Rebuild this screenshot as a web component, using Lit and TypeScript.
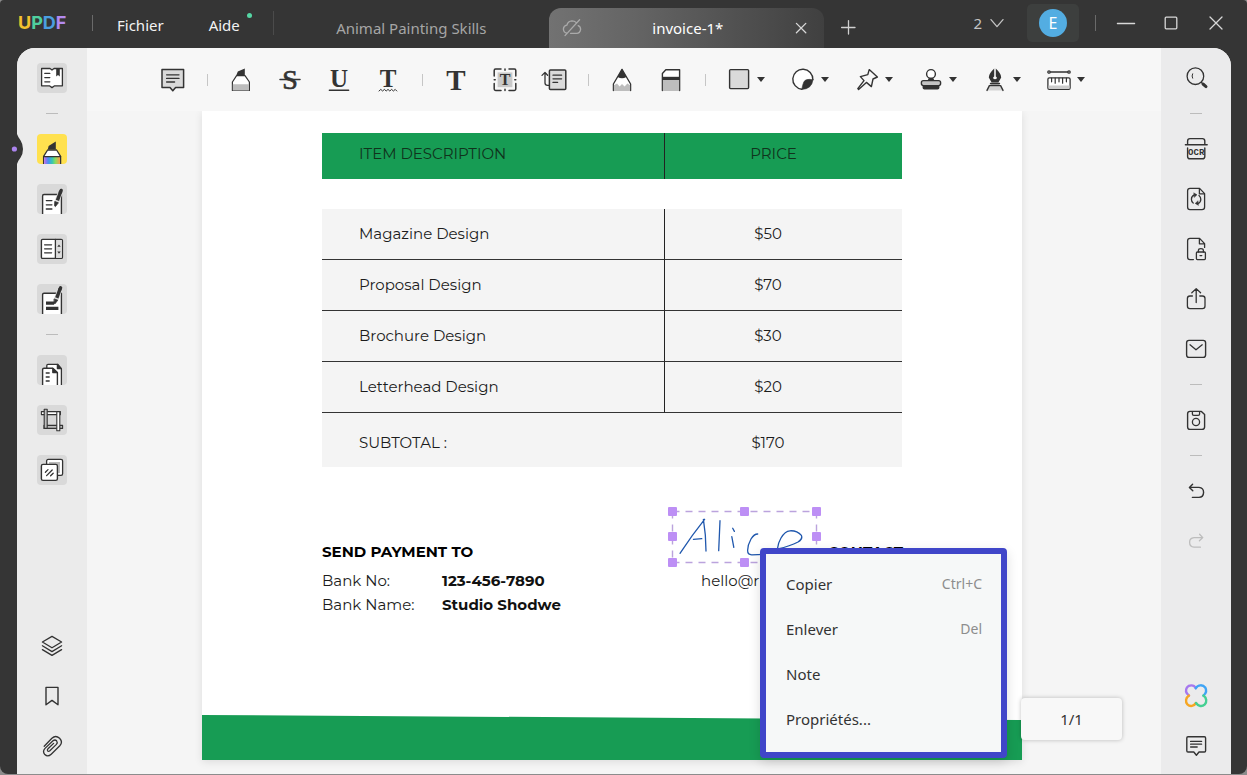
import { LitElement, html, svg, css } from "lit";
import { customElement } from "lit/decorators.js";
import { classMap } from "lit/directives/class-map.js";

const draw = (size: number, body: unknown) => html`<svg
  width=${size}
  height=${size}
  viewBox="0 0 ${size} ${size}"
  fill="none"
  stroke="currentColor"
  stroke-width="1.3"
  stroke-linecap="round"
  stroke-linejoin="round"
  aria-hidden="true"
>${body}</svg>`;

const pen = svg`<path d="M23.8 7.2 L20.4 16.4" stroke="#ddd" stroke-width="5"/><path d="M23.8 7.2 L20.4 16.4" stroke-width="3.4" stroke-linecap="butt"/><path d="M18 17.6L21.4 18.8L18.4 22.6Q17.6 22.4 17.6 21.4Z" fill="currentColor" stroke-width=".8"/><path d="M23.4 8.2L24.2 6.4" stroke-width="3.4"/>`;

/* Left and right rail glyphs, 30 x 30 */
const rail: Record<string, unknown> = {
  reader: svg`<path d="M4.6 5.5 H13 L15 7 L17 5.5 H25.4 V22.8 H17.6 L15 24.6 L12.4 22.8 H4.6 Z" fill="#fff" stroke-width="1.3"/><path d="M7.8 10.4h5M7.8 14.6h5M7.8 18.8h5"/><path d="M19.2 5.4h3.6v8l-1.8-1.5-1.8 1.5z" fill="currentColor" stroke="none"/>`,
  marker: svg`<defs><linearGradient id="rb"><stop offset="0" stop-color="#c06be8"/><stop offset=".25" stop-color="#4a8cf5"/><stop offset=".5" stop-color="#35c8b0"/><stop offset=".72" stop-color="#8fdc5a"/><stop offset="1" stop-color="#ff9a4a"/></linearGradient></defs><path d="M10.8 15.4 L11.6 12 L18.8 7.4 V15.4 Z" fill="currentColor" stroke="none"/><path d="M10.6 16 H19.6 L23.6 22.4 V31 H6.6 V22.4 Z" fill="#fff"/><path d="M7.2 23h15.8v8H7.2z" fill="url(#rb)" stroke="none"/><path d="M6.6 22.6h17"/>`,
  edit: svg`<path d="M5.6 31 V12 Q5.6 10.5 7 10.5 H24.4 V31" fill="#fff" stroke-width="1.4"/><path d="M9.3 16.6h5.6M9.3 20.8h5.6M9.3 25h5.6"/>${pen}`,
  form: svg`<rect x="4.4" y="5.4" width="21" height="19" rx="1.2" fill="#fff" stroke-width="1.4"/><path d="M18.6 6h6.2v17.8h-6.2z" fill="#dcdcdc" stroke="none"/><path d="M18.4 5.4v19M7.6 10.8h7M7.6 14.8h7M7.6 18.8h7"/><path d="M20.3 12.8l1.7-2.4 1.7 2.4zM20.3 17.4l1.7 2.4 1.7-2.4z" fill="currentColor" stroke="none"/>`,
  redact: svg`<path d="M5.6 31 V10.6 Q5.6 9.2 7 9.2 H24.4 V31" fill="#fff" stroke-width="1.4"/><path d="M9 17.6h8v3.2H9zM9 22.8h12.4v3.2H9z" fill="currentColor" stroke="none"/><g transform="translate(-.6 -2.6)">${pen}</g>`,
  pages: svg`<path d="M9.8 31 V10.6 Q9.8 9.3 11 9.3 H20.6 L24.4 13.6 V31" fill="#fff"/><path d="M20.4 9.4v4.2h3.8z" fill="currentColor"/><path d="M5.6 31 V14.6 Q5.6 13.2 7 13.2 H15.8 L20.4 17.6 V31" fill="#fff" stroke-width="1.4"/><path d="M15.8 13.4v4.2h4.4z" fill="currentColor"/><path d="M9.2 18h3M9.2 22h3M9.2 26h3"/>`,
  crop: svg`<g stroke-width="1.1"><path d="M4.4 6.6H23.4V9.6H4.4Z" fill="#fff"/><path d="M7 20.4H25.6V23.4H7Z" fill="#bdbdbd"/><path d="M7.2 4.2H10.2V23.4H7.2Z" fill="#bdbdbd"/><path d="M19.8 6.6H22.8V25.8H19.8Z" fill="#fff"/></g>`,
  watermark: svg`<rect x="9.6" y="4.4" width="16" height="16" rx="1.6" fill="#fff"/><rect x="12" y="7" width="11" height="11" fill="#bbb" stroke="none"/><rect x="4.4" y="9.4" width="16" height="16" rx="1.6" fill="#fff" stroke-width="1.4"/><path d="M8.4 17.2l2.6-2.6M9.6 20.6l5.6-5.6M13.6 20.8l2.6-2.6"/>`,
  layers: svg`<path d="M15 5.4 L24.6 11 L15 16.8 L5.4 11 Z"/><path d="M5.4 14.8 L15 20.6 L24.6 14.8M5.4 18.6 L15 24.4 L24.6 18.6"/>`,
  bookmark: svg`<path d="M9 6.4 H21 V23.8 L15 19.4 L9 23.8 Z" stroke-width="1.4"/>`,
  clip: svg`<path d="M7.2 15.2 L14.9 7.2 Q18.6 3.8 22.6 7.2 Q26.2 11 22.8 14.8 L14.2 23.2 Q10.8 26.4 7.8 23.6 Q5.2 20.4 8 17.4 L16 9.8 Q18 8.2 19.6 9.8 Q21 11.6 19.4 13.4 L12.6 20 Q11.4 20.8 10.6 19.8 Q10 18.8 11 17.8 L16.6 12.4"/>`,
  search: svg`<circle cx="14.4" cy="13.2" r="8.3"/><path d="M11.6 10.8q-1.2 2.2 0 4.4" stroke-width="1"/><path d="M20.4 19.4l1.4 1.4"/><path d="M22 21l3 2.6" stroke-width="3"/>`,
  ocr: svg`<path d="M6.6 10.6 V7 Q6.6 4.6 9 4.6 H21.4 Q23.8 4.6 23.8 7 V10.6M4.4 10.8H26.2M6.6 14V22.4Q6.6 24.8 9 24.8H21.4Q23.8 24.8 23.8 22.4V14" stroke-width="1.4"/><text x="15.2" y="21.4" text-anchor="middle" class="ocr" stroke="none" fill="currentColor">OCR</text>`,
  convert: svg`<path d="M9 4.4 H18.6 L23.6 9.6 V23 Q23.6 25.6 21 25.6 H9 Q6.6 25.6 6.6 23 V6.8 Q6.6 4.4 9 4.4 Z"/><path d="M18.4 4.6 V9.8 H23.4"/><path d="M13.4 10.8 Q10.4 12 10.4 15.2 Q10.4 17.6 12.2 19M16.8 19.6 Q19.8 18.4 19.8 15.2 Q19.8 12.8 18 11.4"/><path d="M13 9l3 1.8-2.6 2.4zM17.2 21.2l-3-1.8 2.6-2.4z" fill="currentColor" stroke-width=".5"/>`,
  protect: svg`<path d="M12.4 25.6 H9 Q6.6 25.6 6.6 23 V6.8 Q6.6 4.4 9 4.4 H18.6 L23.6 9.6 V13.4M18.4 4.6 V9.8 H23.4"/><rect x="15.4" y="18" width="9" height="7.6" rx="1"/><path d="M17.4 18V16.4Q17.4 14.6 19.9 14.6T22.4 16.4V18M19 21.6h1.8"/>`,
  share: svg`<path d="M11.4 12 H9 Q6.4 12 6.4 14.4 V22 Q6.4 24.6 9 24.6 H21.4 Q24 24.6 24 22 V14.4 Q24 12 21.4 12 H18.8M15.2 18.6V4.8M10.8 8.8L15.2 4.6L19.6 8.8"/>`,
  mail: svg`<rect x="5.6" y="6.4" width="19" height="17" rx="2.4" stroke-width="1.4"/><path d="M9 10.8 L15 15.8 L21.2 10.8"/>`,
  save: svg`<path d="M9 6.4 H20.4 L23.6 9.6 V22 Q23.6 24.4 21 24.4 H9 Q6.6 24.4 6.6 22 V8.8 Q6.6 6.4 9 6.4 Z" stroke-width="1.4"/><path d="M11.4 6.6V9Q11.4 10.4 12.8 10.4H17.2Q18.6 10.4 18.6 9V6.6"/><circle cx="15" cy="17" r="3.6"/>`,
  undo: svg`<path d="M11.6 8.2 L8.4 11.4 L11.8 14.8M8.6 11.4 H18 Q22.6 11.8 22.6 16.4 Q22.4 21.2 18 21.4 H11.4" stroke-width="1.4"/>`,
  redo: svg`<path d="M18.6 8.2 L21.8 11.6 L18.4 14.8M21.6 11.6 H13 Q8.6 12 8.6 16.2 Q8.6 20.8 13 21.2 H19.4"/>`,
  ai: svg`<g stroke-width="2.4"><path d="M14.8 7.2 C12.8 3.2 7.8 4 6 6.4 C4 9.6 5.4 12.6 8 14.6" stroke="#a678ee"/><path d="M14.8 7.2 C17 3.4 22 3.6 24.2 6.4 C26 9.6 24.8 12.6 22.4 14.6" stroke="#3fa4f5"/><path d="M8 14.6 C4.6 16.8 4.2 21 6.4 23.4 C9.2 26 13 25.2 15 22" stroke="#f6a623"/><path d="M22.4 14.6 C25.8 17 26 21 23.8 23.4 C21 26 17.4 25.4 15 22" stroke="#45cf93"/></g>`,
  note: svg`<path d="M7 5.8 H23.4 Q24.6 5.8 24.6 7 V19.8 Q24.6 21 23.4 21 H18 L15.4 24.2 L12.8 21 H7 Q5.8 21 5.8 19.8 V7 Q5.8 5.8 7 5.8 Z" stroke-width="1.4"/><path d="M9.6 10.4h11M9.6 13.2h11M9.6 16h6.6"/>`,
};

/* Toolbar glyphs, 24 x 24 */
const ruler = svg`<circle cx="2" cy="4" r="1.2"/><circle cx="22" cy="4" r="1.2"/><path d="M3.4 4h17.2"/><rect x=".9" y="9.8" width="22.2" height="11.6" rx="1.4" fill="#fff"/><path d="M1.6 17.6h21v3.2h-21z" fill="#ccc" stroke="none"/><path d="M4.6 10.2v3.6M8.2 10.2v5M12 10.2v3.6M15.6 10.2v5M19.4 10.2v3.6" stroke-width="1.2"/>`;
const tools: Array<{ id: string; label: string; art?: unknown; drop?: boolean }> = [
  { id: "comment", label: "Note", art: svg`<path d="M1 1.4 H22.6 V19.4 H14.6 L11.8 22.8 L9 19.4 H1 Z" fill="#dadada" stroke-width="1.5"/><path d="M5.6 6.8h12.4M5.6 10.4h12.4M5.6 14h8"/>` },
  { id: "|", label: "" },
  { id: "highlight", label: "Surligner", art: svg`<path d="M7.2 7.4 L8.8 3.4 L15.8.4 V7.4 Z" fill="currentColor" stroke="none"/><path d="M7.6 7.6 H16 L20.4 14 V22.4 H3.4 V14 Z" fill="#fff" stroke-width="1.2"/><path d="M3.8 16.2h16.2v6.2H3.8z" fill="#bdbdbd" stroke="none"/>` },
  { id: "strike", label: "Barrer", art: svg`<text x="12" y="21" text-anchor="middle" class="g reg" fill="currentColor">S</text><path d="M2 11.4h20" stroke-width="1.5"/>` },
  { id: "underline", label: "Souligner", art: svg`<text x="12" y="18.6" text-anchor="middle" class="g" stroke="none" fill="currentColor">U</text><path d="M2.4 22.2h19.2" stroke-width="1.5"/>` },
  { id: "squiggly", label: "Souligner en vague", art: svg`<text x="12" y="19" text-anchor="middle" class="g" stroke="none" fill="currentColor">T</text><path d="M3 23l1.8-1.6 1.8 1.6 1.8-1.6 1.8 1.6 1.8-1.6 1.8 1.6 1.8-1.6 1.8 1.6 1.8-1.6 1.6 1.6" stroke-width="1"/>` },
  { id: "|", label: "" },
  { id: "text", label: "Texte", art: svg`<text x="12" y="21.6" text-anchor="middle" class="g big" stroke="none" fill="currentColor">T</text>` },
  { id: "textbox", label: "Zone de texte", art: svg`<path d="M4.6 4.4h14.8v14.8H4.6z" fill="#c9c9c9" stroke="none"/><text x="12" y="17.4" text-anchor="middle" class="g small" stroke="none" fill="currentColor">T</text><path d="M1.2 8V2.4Q1.2 1 2.6 1H8M16 1h5.4Q22.8 1 22.8 2.4V8M22.8 15.6v5.4Q22.8 22.4 21.4 22.4H16M8 22.4H2.6Q1.2 22.4 1.2 21V15.6M12 1v1.2M12 21.2v1.2M1.2 11.8h1M21.8 11.8h1" stroke-width="1.5"/>` },
  { id: "callout", label: "Légende", art: svg`<rect x="7.4" y="2" width="16.4" height="19.6" rx="1" fill="#dadada" stroke-width="1.5"/><path d="M11 7.2h8.6M11 10.8h8.6M11 14.4h4.6M7 17.4H5.6Q3 17.4 3 15V4.6M0 7.4L3 4.4L5.6 7.2"/>` },
  { id: "|", label: "" },
  { id: "pencil", label: "Crayon", art: svg`<path d="M3.4 22.6V16L12 1.4L20.6 16V22.6" fill="#fff" stroke-width="1.3"/><path d="M3.9 17.2L7 15.6L9.6 18.4L12 16L14.6 18.4L17.4 15.6L20.1 17.2V23H3.9z" fill="#bdbdbd" stroke="none"/><path d="M12 .8L16.4 9Q12 11.4 7.6 9Z" fill="currentColor" stroke="none"/>` },
  { id: "eraser", label: "Gomme", art: svg`<path d="M3.4 22.6V5.4L6.8 1.8H20.6V22.6" fill="#fff" stroke-width="1.4"/><path d="M3.9 12h16.2v11H3.9z" fill="#bdbdbd" stroke="none"/><path d="M3 8.8h18v3.2H3z" fill="currentColor" stroke="none"/>` },
  { id: "|", label: "" },
  { id: "shape", label: "Forme", drop: true, art: svg`<rect x="2.6" y="1.6" width="19" height="19" rx="1" fill="#dadada" stroke-width="1.4"/>` },
  { id: "sticker", label: "Autocollant", drop: true, art: svg`<path d="M10.8 21.2A10 10 0 1 1 21.8 11.6" fill="#fff" stroke-width="1.4"/><path d="M22 11.8Q14.6 10.2 12.8 14Q11.4 17.2 10.8 21.4Q20.8 21.2 22 11.8Z" fill="currentColor" stroke-width=".6"/>` },
  { id: "pin", label: "Épingle", drop: true, art: svg`<path d="M14.2 1.6L22.4 9L18 11L16.4 18.6L11.4 14.4L3.6 21.4L2.8 20.6L9 12.6L5.4 8.6L12.8 6.6Z" stroke-width="1.4"/>` },
  { id: "stamp", label: "Tampon", drop: true, art: svg`<circle cx="12" cy="6" r="4.4" fill="#fff" stroke-width="1.4"/><path d="M9.4 12.4L10.2 10.4H13.8L14.6 12.4z" fill="currentColor"/><rect x="2.4" y="12.6" width="19.2" height="5" rx="2" fill="#c4c4c4" stroke-width="1.4"/><path d="M3.6 17.6h16.8v2.2Q20.4 21.6 18.6 21.6H5.4Q3.6 21.6 3.6 19.8z" fill="currentColor" stroke="none"/>` },
  { id: "sign", label: "Signature", drop: true, art: svg`<path d="M11.2 .6Q5.6 6 5.8 9.4L8.6 14.6H15.4L18.2 9.4Q18.4 6 12.8 .6V8.4Q14.2 9 13.8 10.4Q12 12 10.2 10.4Q9.8 9 11.2 8.4Z" fill="currentColor" stroke="none"/><path d="M7.6 15.6H16.4" stroke-width="1.6"/><path d="M6.6 18.2h10.8l1.8 4.2H4.8z" fill="#d4d4d4" stroke="none"/><path d="M6.4 17.6H17.6L20 22.4M6.4 17.6L4 22.4" stroke-width="1.4"/>` },
  { id: "measure", label: "Mesurer", drop: true, art: ruler },
];

@customElement("app-root")
export class AppRoot extends LitElement {
  static styles = css`
    :host {
      --ink: #333;
      --chrome: #353535;
      display: block;
      height: 100vh;
      background: #8c8c8c;
      font: 15px/20px "Noto Sans", "Segoe UI", sans-serif;
      color: var(--ink);
    }
    * { box-sizing: border-box; }
    button {
      font: inherit;
      color: inherit;
      border: 0;
      padding: 0;
      background: none;
      display: flex;
      align-items: center;
      justify-content: center;
      flex: none;
    }
    svg { display: block; flex: none; overflow: visible; }
    .window {
      height: calc(100vh - 1px);
      display: flex;
      flex-direction: column;
      background: var(--chrome);
      border-radius: 4px 4px 8px 8px;
      overflow: hidden;
    }

    .titlebar {
      height: 48px;
      flex: none;
      display: flex;
      align-items: center;
      padding: 0 16px 2px 18px;
      color: #f2f2f2;
    }
    .logo { font: 700 18px/20px Inter, "Open Sans", sans-serif; width: 74px; }
    .u { color: #f2c12e; }
    .p { color: #4fcf9f; }
    .d { color: #4b9fe0; }
    .f { color: #b48af0; }
    .vsep { width: 1px; height: 16px; background: #6a6a6a; flex: none; }
    .vsep.tall { height: 24px; background: #4b4b4b; }
    .menubar { display: flex; gap: 45px; margin: 4px 24px 0; }
    .menubar + .vsep { margin-left: 9px; }
    .help { position: relative; }
    .help::after {
      content: "";
      position: absolute;
      right: -12px;
      top: -2px;
      width: 5px;
      height: 5px;
      border-radius: 50%;
      background: #55d6a4;
    }
    .tabs { display: flex; align-self: flex-end; flex: 0 1 550px; margin-bottom: -2px; }
    .tab {
      flex: 1 1 50%;
      min-width: 0;
      height: 40px;
      display: flex;
      align-items: center;
      justify-content: center;
      color: #a6a6a6;
    }
    .tab.active {
      justify-content: space-between;
      padding: 0 16px 0 13px;
      color: #fff;
      background: linear-gradient(90deg, #727272, #656565 30%, #404040);
      border-radius: 12px 12px 0 0;
    }
    .tab.active svg { color: #aaa; }
    .plus { width: 48px; height: 40px; margin-top: 8px; color: #d0d0d0; }
    .winctl { margin-left: auto; display: flex; align-items: center; color: #d8d8d8; }
    .count { gap: 8px; margin-right: 23px; color: #c4c4c4; }
    .account { width: 52px; height: 38px; border-radius: 5px; background: #3d3f3e; margin-right: 16px; }
    .avatar {
      width: 28px;
      height: 28px;
      border-radius: 50%;
      background: #53ade2;
      color: #fff;
      font-size: 16px;
      line-height: 28px;
    }
    .ctl { width: 30px; height: 30px; margin-left: 15px; }

    .workspace {
      flex: 1;
      min-height: 0;
      margin: 0 16px 0 17px;
      display: flex;
      background: #f6f6f6;
      border-radius: 18px 18px 0 0;
      position: relative;
    }
    .notch { position: absolute; left: -6px; top: 86px; }
    .rail {
      width: 70px;
      flex: none;
      display: flex;
      flex-direction: column;
      align-items: center;
      gap: 20px;
      padding: 15px 0 13px;
      background: #ebebeb;
      border-radius: 18px 0 0 0;
    }
    .rail.right { border-radius: 0 18px 0 0; background: #ebebec; }
    .rail button { width: 30px; height: 30px; border-radius: 4px; overflow: hidden; }
    .rail .tile { background: #d9d9d9; }
    .rail .on { background: #ffe14f; }
    .rail .off { color: #bdbdbd; }
    .rail .push { margin-top: auto; }
    .rail i { width: 12px; height: 1px; background: #bcbcbc; flex: none; }
    .ocr { font: 700 9px "Liberation Mono", monospace; }

    .center { flex: 1; min-width: 0; display: flex; flex-direction: column; position: relative; }
    .toolbar {
      height: 63px;
      flex: none;
      display: flex;
      align-items: center;
      justify-content: center;
      gap: 25px;
      padding-right: 2px;
      background: #f7f7f7;
    }
    .toolbar .drop { gap: 6px; padding-right: 1px; }
    .toolbar i { width: 1px; height: 12px; margin: 0 -4px 0 -3px; background: #c6c6c6; }
    .caret { border: 4px solid transparent; border-top: 5px solid #333; border-bottom: 0; }
    .g { font: 700 25px "Liberation Serif", serif; }
    .reg { font-size: 28px; font-weight: 400; stroke-width: .7px; }
    .big { font-size: 29px; }
    .small { font-size: 16px; }

    .viewer {
      flex: 1;
      min-height: 0;
      display: flex;
      justify-content: center;
      padding: 0 24px 14px 0;
      background: #f5f5f5;
    }
    .page {
      flex: 0 1 820px;
      min-width: 0;
      display: flex;
      flex-direction: column;
      position: relative;
      padding-top: 22px;
      background: #fff;
      box-shadow: 0 2px 8px rgba(0, 0, 0, .1);
      color: #1c1c1c;
      font: 15px/24px Montserrat, Inter, sans-serif;
      clip-path: inset(0 -200px -14px -12px);
    }
    table { margin: 0 120px; border-spacing: 0; table-layout: fixed; }
    th { font-weight: 400; }
    td, th { padding: 0; height: 51px; text-align: left; }
    td:first-child, th:first-child { width: 343px; padding-left: 37px; }
    td:last-child, th:last-child { text-align: center; padding-right: 31px; }
    thead th {
      height: 46px;
      padding-bottom: 4px;
      background: #179c54;
      color: #10331c;
    }
    thead th:first-child, .line td:first-child { border-right: 1px solid #222; }
    thead th:last-child { padding-right: 20px; }
    tbody::before { content: ""; display: block; height: 30px; }
    tbody td { background: #f4f4f4; }
    .line td { border-bottom: 1px solid #333; }
    .total td { height: 54px; padding-top: 6px; }

    .payment { display: flex; justify-content: space-between; margin: 73px 119px 0 120px; }
    h2 { margin: 0 0 5px; font: 700 15px/24px Montserrat, Inter, sans-serif; color: #000; }
    dl { margin: 0; display: grid; grid-template-columns: 120px auto; }
    dt, dd { margin: 0; }
    dd { font-weight: 700; color: #111; }
    .contact { width: 202px; }
    .contact h2 { text-align: right; }
    .band { margin-top: auto; height: 45px; background: #179c54; clip-path: polygon(0 0, 100% 5px, 100% 100%, 0 100%); }

    .signature { position: absolute; left: 464px; top: 394px; }
    .menu {
      position: absolute;
      left: 558px;
      top: 437px;
      width: 247px;
      margin: 0;
      padding: 7px 0 11px;
      list-style: none;
      background: #f6f8f8;
      border: 6px solid #4046c9;
      border-radius: 4px;
      box-shadow: 0 4px 12px rgba(0, 0, 0, .14);
      color: #333;
      font: 15px/20px "Noto Sans", "Segoe UI", sans-serif;
    }
    .menu button { width: 100%; height: 45px; padding: 0 19px 0 20px; justify-content: space-between; }
    kbd { font: 14px/20px "Noto Sans", "Segoe UI", sans-serif; color: #8d8d8d; }
    .pager {
      position: absolute;
      right: 39px;
      bottom: 34px;
      width: 101px;
      height: 42px;
      background: #f8f8f8;
      border-radius: 4px;
      box-shadow: 0 0 4px rgba(0, 0, 0, .25);
      display: flex;
      align-items: center;
      justify-content: center;
    }
  `;

  private railButton(id: string, label: string, mods: Record<string, boolean> = {}) {
    return html`<button class=${classMap(mods)} aria-label=${label}>${draw(30, rail[id])}</button>`;
  }

  private titlebar() {
    return html`<header class="titlebar">
      <span class="logo"><span class="u">U</span><span class="p">P</span><span class="d">D</span><span class="f">F</span></span>
      <span class="vsep"></span>
      <nav class="menubar"><button>Fichier</button><button class="help">Aide</button></nav>
      <span class="vsep tall"></span>
      <div class="tabs">
        <button class="tab">Animal Painting Skills</button>
        <div class="tab active">
          ${draw(20, svg`<path d="M5.2 15.2Q1.4 14.6 1.4 11Q1.6 7.8 4.8 7.2Q6 3 10 2.8Q12.6 2.8 14 4.4M16.2 7.6Q18.8 8.8 18.6 11.6Q18 15.2 14.6 15.4H8.6M17.6 1.8L3 17.6"/>`)}
          <span>invoice-1*</span>
          <button aria-label="Fermer l'onglet">${draw(14, svg`<path d="M2.4 2.4l9.4 9.4M11.8 2.4L2.4 11.8" stroke="#d8d8d8"/>`)}</button>
        </div>
      </div>
      <button class="plus" aria-label="Nouvel onglet">${draw(14, svg`<path d="M7.5.6v13.4M.6 7.5h13.4"/>`)}</button>
      <div class="winctl">
        <button class="count">2 ${draw(14, svg`<path d="M1 3.6L7 10.6L13 3.6"/>`)}</button>
        <button class="account"><span class="avatar">E</span></button>
        <span class="vsep"></span>
        <button class="ctl" aria-label="Réduire">${draw(20, svg`<path d="M1.4 10.5h17.2"/>`)}</button>
        <button class="ctl" aria-label="Agrandir">${draw(14, svg`<rect x="1.2" y="1.2" width="11.6" height="11.6" rx="1"/>`)}</button>
        <button class="ctl" aria-label="Fermer">${draw(14, svg`<path d="M1 1l12 12M13 1L1 13"/>`)}</button>
      </div>
    </header>`;
  }

  private toolbar() {
    return html`<div class="toolbar">
      ${tools.map((t) =>
        t.id === "|"
          ? html`<i></i>`
          : html`<button class=${classMap({ drop: !!t.drop })} aria-label=${t.label}>
              ${draw(24, t.art)}${t.drop ? html`<span class="caret"></span>` : ""}
            </button>`
      )}
    </div>`;
  }

  private page() {
    const rows = [
      ["Magazine Design", "$50"],
      ["Proposal Design", "$70"],
      ["Brochure Design", "$30"],
      ["Letterhead Design", "$20"],
    ];
    const menu = [["Copier", "Ctrl+C"], ["Enlever", "Del"], ["Note", ""], ["Propriétés...", ""]];
    const grips = [[0, 0], [72, 0], [144, 0], [0, 25], [144, 25], [0, 51], [72, 51], [144, 51]];
    return html`<article class="page">
      <table>
        <thead><tr><th>ITEM DESCRIPTION</th><th>PRICE</th></tr></thead>
        <tbody>
          ${rows.map(([name, price]) => html`<tr class="line"><td>${name}</td><td>${price}</td></tr>`)}
          <tr class="total"><td>SUBTOTAL :</td><td>$170</td></tr>
        </tbody>
      </table>
      <section class="payment">
        <div>
          <h2>SEND PAYMENT TO</h2>
          <dl><dt>Bank No:</dt><dd>123-456-7890</dd><dt>Bank Name:</dt><dd>Studio Shodwe</dd></dl>
        </div>
        <div class="contact"><h2>CONTACT</h2>hello@r</div>
      </section>
      <div class="band"></div>
      <svg class="signature" width="156" height="64" viewBox="-6 -6 156 64" fill="none" role="img" aria-label="Alice">
        <path d="M.5.5H144.5M.5 51.5H144.5M.5.5V51.5M144.5.5V51.5" stroke="#bba3dd" stroke-width="1.4" stroke-dasharray="7 6"/>
        <path d="M8 42.3Q20 24 32.6 8.3M31.4 8.3Q34 24 34 40M21.4 28.3L29.8 27.7M48 9.7L46.7 39.7M60.7 17.3L62.4 20.4M59.8 25.7L61.8 36.3M85.7 23Q82 23 79 28Q75.6 34 75.6 39.6Q75.6 43.8 79.7 43.8L93 43.3M105.4 38Q106 32 109 27Q113 20 118 19.8Q125 19.4 129.4 24.4Q131 28 126 31Q118 35 106 38Q105 43 108 45" stroke="#1f57ad" stroke-width="1.3" stroke-linecap="round" stroke-linejoin="round"/>
        ${grips.map(([x, y]) => svg`<rect x=${x - 4} y=${y - 4} width="9" height="9" rx="1" fill="#bd8ff5"/>`)}
      </svg>
      <ul class="menu">
        ${menu.map(([label, key]) => html`<li><button>${label}${key ? html`<kbd>${key}</kbd>` : ""}</button></li>`)}
      </ul>
    </article>`;
  }

  render() {
    return html`<div class="window">
      ${this.titlebar()}
      <div class="workspace">
        <aside class="rail">
          ${this.railButton("reader", "Lecteur", { tile: true })}
          <i></i>
          ${this.railButton("marker", "Commenter", { on: true })}
          ${this.railButton("edit", "Modifier", { tile: true })}
          ${this.railButton("form", "Formulaire", { tile: true })}
          ${this.railButton("redact", "Biffer", { tile: true })}
          <i></i>
          ${this.railButton("pages", "Organiser", { tile: true })}
          ${this.railButton("crop", "Recadrer", { tile: true })}
          ${this.railButton("watermark", "Filigrane", { tile: true })}
          ${this.railButton("layers", "Calques", { push: true })}
          ${this.railButton("bookmark", "Signets")}
          ${this.railButton("clip", "Pièces jointes")}
        </aside>
        <main class="center">
          ${this.toolbar()}
          <div class="viewer">${this.page()}</div>
          <div class="pager">1/1</div>
        </main>
        <aside class="rail right">
          ${this.railButton("search", "Rechercher")}
          <i></i>
          ${this.railButton("ocr", "OCR")}
          ${this.railButton("convert", "Convertir")}
          ${this.railButton("protect", "Protéger")}
          ${this.railButton("share", "Partager")}
          ${this.railButton("mail", "Envoyer")}
          <i></i>
          ${this.railButton("save", "Enregistrer")}
          <i></i>
          ${this.railButton("undo", "Annuler")}
          ${this.railButton("redo", "Rétablir", { off: true })}
          ${this.railButton("ai", "Assistant", { push: true })}
          ${this.railButton("note", "Commentaires")}
        </aside>
        <svg class="notch" width="12" height="30" viewBox="0 0 12 30" aria-hidden="true">
          <path d="M6 0Q7 3 9.6 6.4Q12 10 12 15T9.6 23.6Q7 27 6 30Z" fill="#353535"/>
          <circle cx="3.4" cy="15" r="2.6" fill="#ab84ee"/>
        </svg>
      </div>
    </div>`;
  }
}
